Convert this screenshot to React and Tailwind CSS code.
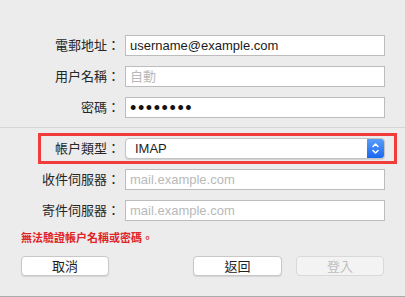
import { useState } from "react";

const cjk = { fontFamily: '"Liberation Sans", "Noto Sans CJK TC", sans-serif' };

function Label({ children, className = "w-[120px]" }) {
    return (
        <span className={`${className} shrink-0 text-right text-[13px] leading-[21px] text-[#262626]`} style={cjk}>
            {children}
        </span>
    );
}

function Field({ value, placeholder, onChange, type = "text", className = "" }) {
    return (
        <input
            type={type}
            value={value}
            placeholder={placeholder}
            onChange={(e) => onChange(e.target.value)}
            className={`ml-[5px] w-[260px] h-[21px] px-[4px] bg-white border border-[#bcbcbc] text-[13px] text-[#1a1a1a] placeholder:text-[#b9b9b9] outline-none ${className}`}
            style={cjk}
        />
    );
}

function Row({ label, children, className = "" }) {
    return (
        <div className={`flex items-center ${className}`}>
            <Label>{label}</Label>
            {children}
        </div>
    );
}

export default function App() {
    const [email, setEmail] = useState("username@example.com");
    const [user, setUser] = useState("");
    const [incoming, setIncoming] = useState("");
    const [outgoing, setOutgoing] = useState("");

    return (
        <div className="w-[405px] h-[297px] bg-[#ececec] flex flex-col overflow-hidden" style={cjk}>
            <div className="pt-[35px] flex flex-col">
                <Row label="電郵地址：">
                    <Field value={email} onChange={setEmail} />
                </Row>
                <Row label="用户名稱：" className="mt-[10px]">
                    <Field value={user} placeholder="自動" onChange={setUser} />
                </Row>
                <Row label="密碼：" className="mt-[10px]">
                    <div className="ml-[5px] w-[260px] h-[21px] pl-[4px] bg-white border border-[#bcbcbc] flex items-center">
                        <span className="text-[18px] leading-none tracking-[1.6px] text-[#111]">••••••••</span>
                    </div>
                </Row>
            </div>

            <div className="mt-[9px] h-px bg-[#d6d6d6]" />

            <div className="mt-[5px] ml-[38px] w-[359px] h-[31px] border-[3px] border-[#f23b3b] flex items-center">
                <Label className="w-[79px]">帳户類型：</Label>
                <div className="ml-[5px] w-[260px] h-[21px] flex bg-white rounded-[4px] border border-[#c4c4c4] shadow-[0_1px_1px_rgba(0,0,0,0.12)] overflow-hidden">
                    <span className="flex-1 pl-[9px] text-[13px] leading-[19px] text-[#1e1e1e]">IMAP</span>
                    <div className="w-[17px] h-full bg-gradient-to-b from-[#5a9cf9] to-[#1668f0] flex items-center justify-center">
                        <svg width="9" height="13" viewBox="0 0 9 13" fill="none" stroke="white" strokeWidth="1.5" strokeLinecap="round" strokeLinejoin="round">
                            <path d="M2 4.5 L4.5 2 L7 4.5" />
                            <path d="M2 8.5 L4.5 11 L7 8.5" />
                        </svg>
                    </div>
                </div>
            </div>

            <Row label="收件伺服器：" className="mt-[5px]">
                <Field value={incoming} placeholder="mail.example.com" onChange={setIncoming} />
            </Row>
            <Row label="寄件伺服器：" className="mt-[10px]">
                <Field value={outgoing} placeholder="mail.example.com" onChange={setOutgoing} />
            </Row>

            <p className="mt-[10px] pl-[21px] text-[11px] leading-[14px] font-bold text-[#e0242a]">無法驗證帳户名稱或密碼。</p>

            <div className="mt-[11px] px-[21px] flex items-center">
                <button className="w-[88px] h-[20px] rounded-[4px] bg-white border border-[#c8c8c8] shadow-[0_1px_1px_rgba(0,0,0,0.1)] text-[13px] leading-none text-[#222]">取消</button>
                <div className="flex-1" />
                <button className="w-[89px] h-[20px] rounded-[4px] bg-white border border-[#c8c8c8] shadow-[0_1px_1px_rgba(0,0,0,0.1)] text-[13px] leading-none text-[#222]">返回</button>
                <button disabled className="ml-[14px] w-[88px] h-[20px] rounded-[4px] bg-[#f3f3f3] border border-[#d9d9d9] text-[13px] leading-none text-[#bdbdbd]">登入</button>
            </div>

            <div className="flex-1" />
            <div className="h-px bg-[#a9a9a9]" />
        </div>
    );
}
